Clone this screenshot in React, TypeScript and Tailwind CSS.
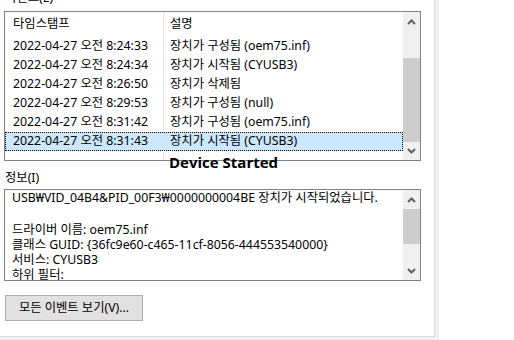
import React from "react";

const font = { fontFamily: '"Segoe UI", "Noto Sans", "Noto Sans CJK KR", sans-serif' };

const rows = [
  ["2022-04-27 오전 8:24:33", "장치가 구성됨 (oem75.inf)"],
  ["2022-04-27 오전 8:24:34", "장치가 시작됨 (CYUSB3)"],
  ["2022-04-27 오전 8:26:50", "장치가 삭제됨"],
  ["2022-04-27 오전 8:29:53", "장치가 구성됨 (null)"],
  ["2022-04-27 오전 8:31:42", "장치가 구성됨 (oem75.inf)"],
  ["2022-04-27 오전 8:31:43", "장치가 시작됨 (CYUSB3)"],
];

function Up() {
  return (
    <svg width="9" height="6" viewBox="0 0 9 6">
      <polyline points="1,5 4.5,1.5 8,5" fill="none" stroke="#606060" strokeWidth="2" />
    </svg>
  );
}
function Down() {
  return (
    <svg width="9" height="6" viewBox="0 0 9 6">
      <polyline points="1,1 4.5,4.5 8,1" fill="none" stroke="#606060" strokeWidth="2" />
    </svg>
  );
}

export default function App() {
  return (
    <div className="w-[514px] h-[340px] bg-white flex overflow-hidden text-[12.3px] text-black" style={font}>
      <div className="w-[439px] h-[340px] bg-[#f0f0f0] shrink-0">
        <div className="w-[435px] h-[337px] bg-white border-r border-b border-[#dadada] flex flex-col pl-[4px]">
          <div className="h-[11px] overflow-hidden">
            <div className="-mt-[10px] leading-[16px] pl-[1px]">이벤트(E)</div>
          </div>
          {/* list box */}
          <div className="relative w-[417px] h-[150px] border border-[#828282] flex">
            <div className="flex-1 relative">
              <div className="absolute left-[158px] top-0 bottom-0 w-px bg-[#e5e5e5]" />
              <div className="h-[25px] flex items-center">
                <div className="w-[158px] pl-[8px]">타임스탬프</div>
                <div className="pl-[7px]">설명</div>
              </div>
              {rows.map((r, i) => {
                const sel = i === rows.length - 1;
                return (
                  <div
                    key={i}
                    className={
                      "h-[19px] flex items-center relative whitespace-nowrap " +
                      (sel ? "bg-[#cce8ff] border border-dotted border-black" : "")
                    }
                  >
                    <div className={"w-[158px] " + (sel ? "pl-[7px]" : "pl-[8px]")}>{r[0]}</div>
                    <div className={sel ? "pl-[6px]" : "pl-[7px]"}>{r[1]}</div>
                  </div>
                );
              })}
            </div>
            <div className="w-[17px] bg-[#f0f0f0] flex flex-col">
              <div className="h-[19px] flex items-center justify-center">
                <Up />
              </div>
              <div className="h-[27px]" />
              <div className="h-[84px] bg-[#cdcdcd]" />
              <div className="flex-1 flex items-center justify-center">
                <Down />
              </div>
            </div>
            <div
              className="absolute left-[164px] top-[141px] font-bold text-[15px] leading-[19px] whitespace-nowrap"
              style={{ fontFamily: '"Open Sans", "Noto Sans", sans-serif' }}
            >
              Device Started
            </div>
          </div>
          <div className="h-[28px] flex items-end pb-[3px] pl-[1px] leading-[16px]">정보(I)</div>
          {/* info box */}
          <div className="w-[417px] h-[92px] border border-[#828282] flex">
            <div className="flex-1 overflow-hidden pl-[7px] leading-[15px] whitespace-nowrap">
              <div>USB₩VID_04B4&amp;PID_00F3₩0000000004BE 장치가 시작되었습니다.</div>
              <div>&nbsp;</div>
              <div className="mt-[2px]">드라이버 이름: oem75.inf</div>
              <div>클래스 GUID: {"{"}36fc9e60-c465-11cf-8056-444553540000{"}"}</div>
              <div>서비스: CYUSB3</div>
              <div>하위 필터:</div>
            </div>
            <div className="w-[17px] bg-[#f0f0f0] flex flex-col">
              <div className="h-[19px] flex items-center justify-center">
                <Up />
              </div>
              <div className="h-[35px] bg-[#cdcdcd]" />
              <div className="flex-1" />
              <div className="h-[19px] flex items-center justify-center">
                <Down />
              </div>
            </div>
          </div>
          <div className="h-[14px]" />
          <div className="w-[138px] h-[26px] bg-[#e1e1e1] border border-[#adadad] flex items-center justify-center ml-[1px]">
            모든 이벤트 보기(V)...
          </div>
        </div>
      </div>
    </div>
  );
}
